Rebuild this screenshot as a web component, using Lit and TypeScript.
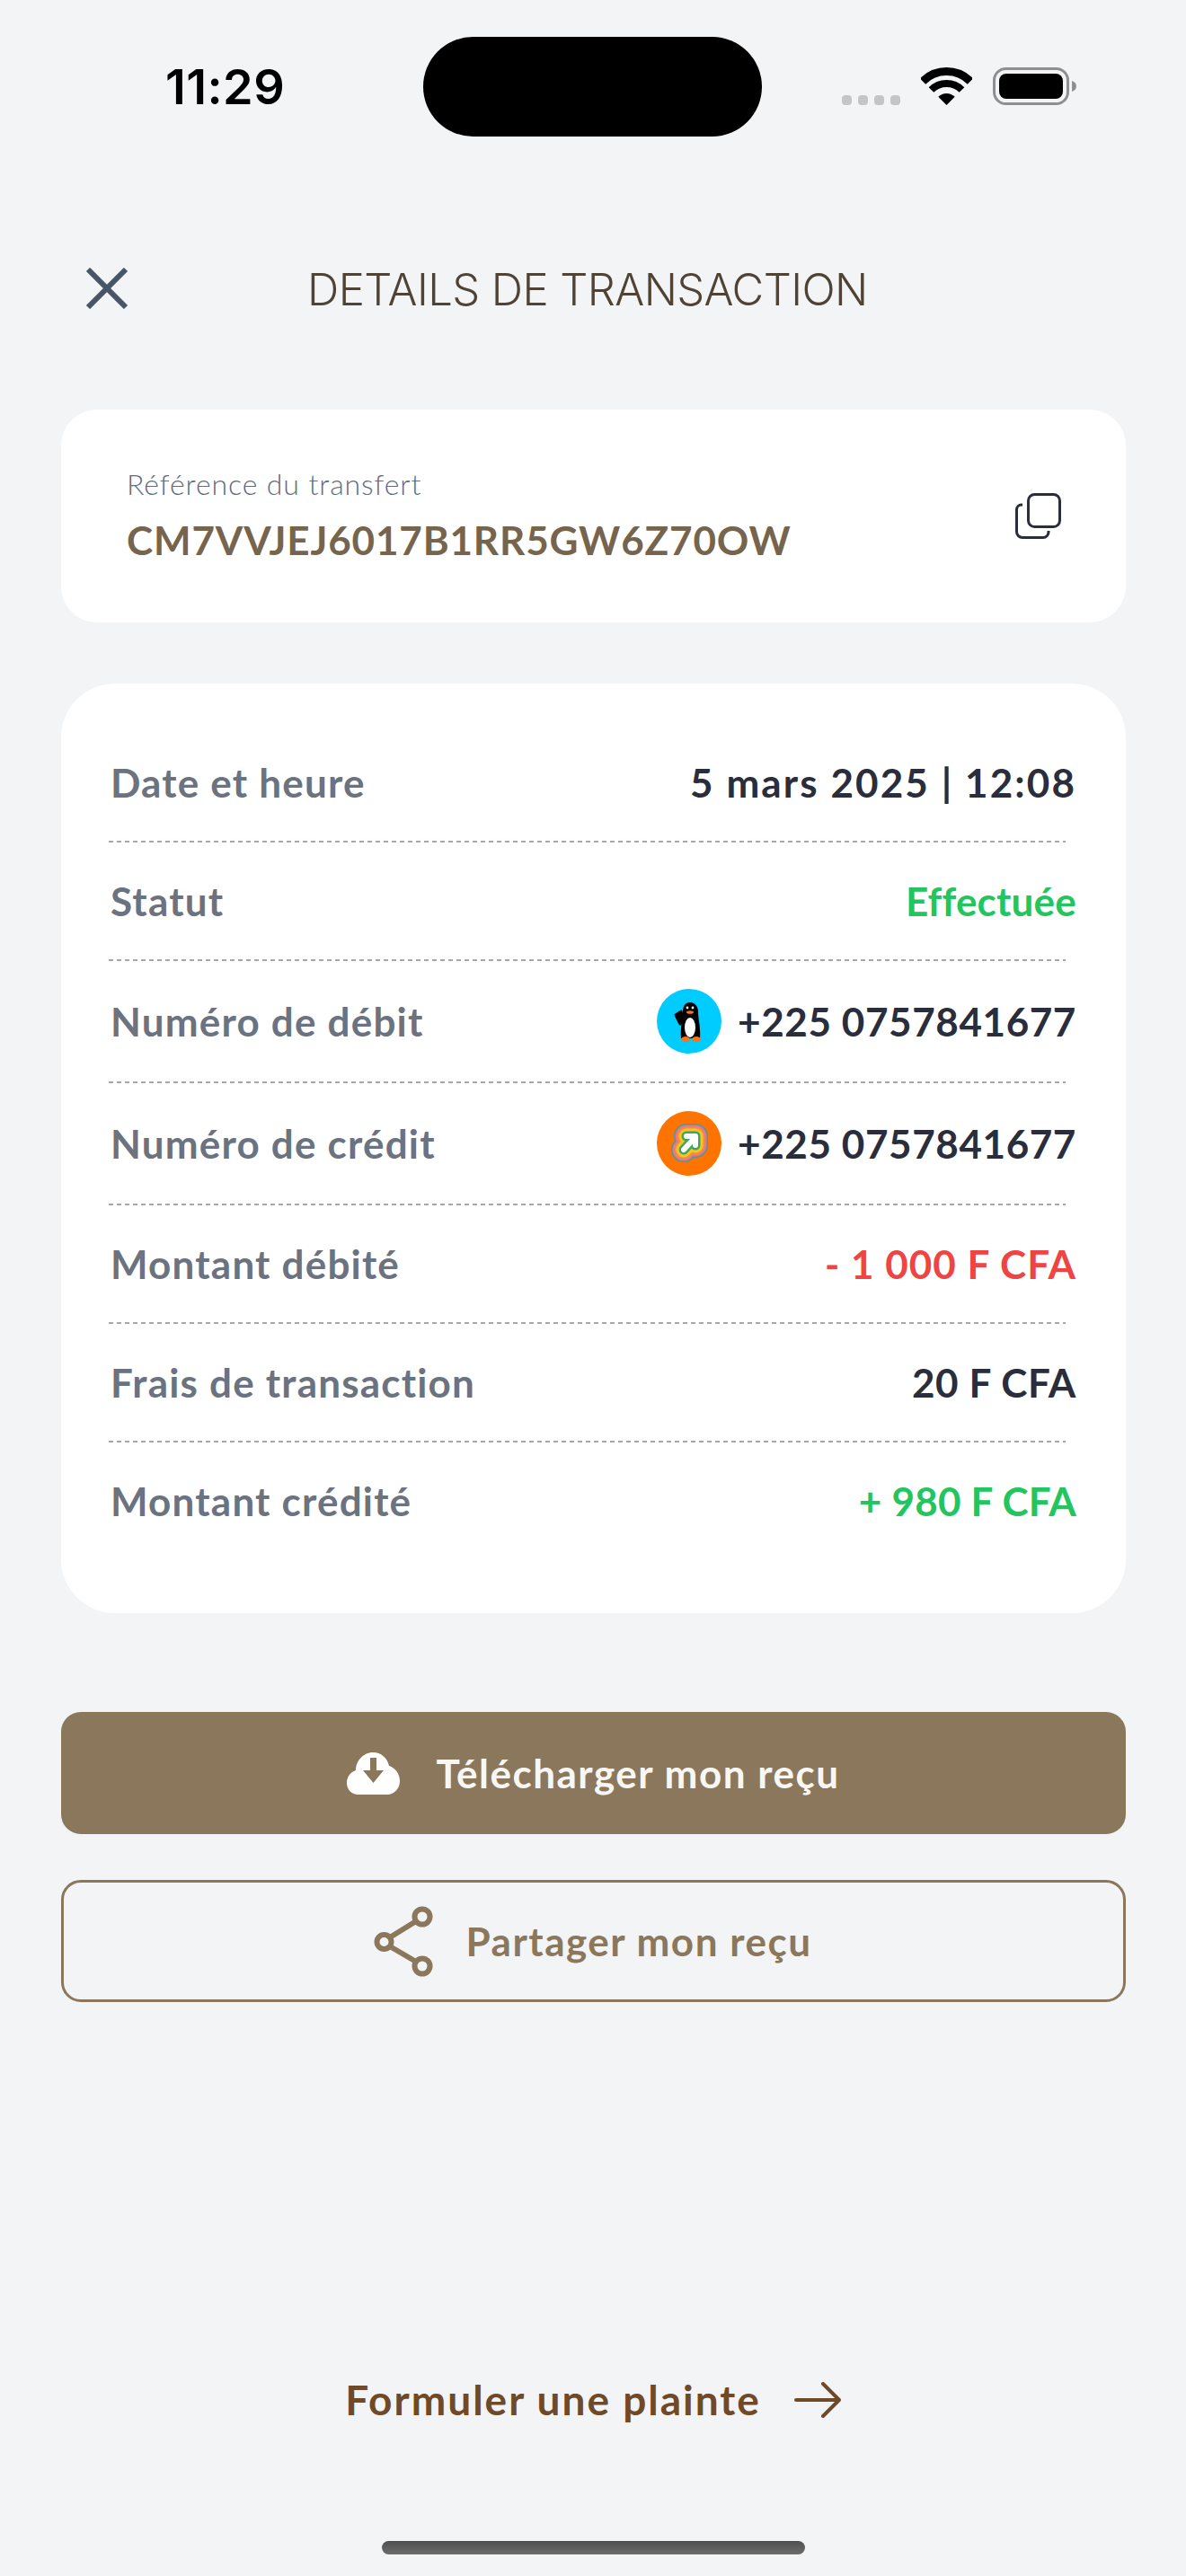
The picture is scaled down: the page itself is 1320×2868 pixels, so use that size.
/**
 * Transaction details screen
 */

import { LitElement, html, css, svg } from 'lit';
import { customElement } from 'lit/decorators.js';

type Row = { label: string; value: string; tone?: string; logo?: 'penguin' | 'arrow' };

const ROWS: Row[] = [
  { label: 'Date et heure', value: '5 mars 2025 | 12:08', tone: 'wide' },
  { label: 'Statut', value: 'Effectuée', tone: 'green' },
  { label: 'Numéro de débit', value: '+225 0757841677', logo: 'penguin' },
  { label: 'Numéro de crédit', value: '+225 0757841677', logo: 'arrow' },
  { label: 'Montant débité', value: '- 1 000 F CFA', tone: 'red' },
  { label: 'Frais de transaction', value: '20 F CFA' },
  { label: 'Montant crédité', value: '+ 980 F CFA', tone: 'green' },
];

const penguin = svg`
  <circle cx="36" cy="36" r="36" fill="#00ccff"/>
  <path d="M21 29 L27 25 L29 33 L26 39 Z" fill="#000" stroke="#000" stroke-width="3" stroke-linejoin="round"/>
  <path d="M37 15 C31 15 29 20 29 26 C29 34 26 42 27 55 L48 55 C49 42 46 34 46 26 C46 20 43 15 37 15 Z" fill="#000"/>
  <ellipse cx="37" cy="43" rx="6" ry="11" fill="#fff"/>
  <circle cx="34" cy="21" r="1.4" fill="#fff"/>
  <circle cx="40" cy="21" r="1.4" fill="#fff"/>
  <ellipse cx="37" cy="26" rx="4" ry="1.8" fill="#f97316"/>
  <ellipse cx="32" cy="56" rx="5" ry="3" fill="#f97316"/>
  <ellipse cx="44" cy="56" rx="5" ry="3" fill="#f97316"/>
`;

const arrowPath = 'M30 43 L43 29 M33 28 L43 28 L43 38';
const arrowLogo = svg`
  <circle cx="36" cy="36" r="36" fill="#ff7300"/>
  <g fill="none" stroke-linecap="round" stroke-linejoin="round">
    ${[
      ['#3f9fa0', 28],
      ['#f46f8c', 25],
      ['#f0903a', 21],
      ['#f7c325', 17],
      ['#3fa65a', 11],
      ['#ffffff', 6],
    ].map(([c, w]) => svg`<path d=${arrowPath} stroke=${c} stroke-width=${w}/>`)}
  </g>
`;

@customElement('app-root')
export class AppRoot extends LitElement {
  static styles = css`
    :host {
      display: block;
      width: 1320px;
      height: 2868px;
      background: #f3f4f6;
      font-family: 'Lato', 'Liberation Sans', sans-serif;
      overflow: hidden;
    }

    .page {
      height: 2868px;
      display: flex;
      flex-direction: column;
      box-sizing: border-box;
    }

    /* status bar */
    .status {
      display: flex;
      align-items: flex-start;
      padding-top: 41px;
      height: 111px;
      flex: none;
    }
    .time {
      margin: 28px 0 0 184px;
      width: 287px;
      font-family: 'Inter', sans-serif;
      font-weight: 600;
      font-size: 54px;
      line-height: 56px;
      letter-spacing: 0.4px;
      color: #000;
    }
    .island {
      width: 377px;
      height: 111px;
      border-radius: 56px;
      background: #000;
    }
    .dots {
      display: flex;
      gap: 7px;
      margin: 65px 0 0 89px;
    }
    .dots span {
      width: 11px;
      height: 11px;
      border-radius: 4px;
      background: #c4c5c8;
    }
    .wifi {
      margin: 34px 0 0 23px;
    }
    .battery {
      margin: 34px 0 0 23px;
    }

    /* header */
    .header {
      display: flex;
      align-items: center;
      height: 46px;
      margin-top: 146px;
      padding-left: 95px;
      flex: none;
    }
    .title {
      margin: 3px 0 0 199px;
      font-family: 'Inter', sans-serif;
      font-weight: 300;
      font-size: 49px;
      line-height: 46px;
      letter-spacing: -0.6px;
      color: #4f4336;
      white-space: nowrap;
    }

    .content {
      display: flex;
      flex-direction: column;
      padding: 0 67px 0 68px;
      flex: none;
    }

    .ref-card {
      margin-top: 112px;
      height: 237px;
      box-sizing: border-box;
      padding: 0 72px 0 73px;
      background: #fff;
      border-radius: 40px;
      display: flex;
      align-items: center;
      justify-content: space-between;
    }
    .ref-text {
      padding-bottom: 4px;
    }
    .ref-label {
      font-size: 32px;
      line-height: 40px;
      font-weight: 300;
      color: #5f6c82;
      letter-spacing: 0.9px;
    }
    .ref-value {
      margin-top: 16px;
      font-size: 44px;
      line-height: 52px;
      font-weight: 700;
      letter-spacing: 0.85px;
      color: #76644c;
    }

    .details {
      margin-top: 68px;
      height: 1035px;
      box-sizing: border-box;
      padding: 45px 55px 0 53px;
      background: #fff;
      border-radius: 60px;
    }
    .row {
      display: flex;
      align-items: center;
      justify-content: space-between;
      padding: 31px 0 31px 2px;
      min-height: 68px;
      font-size: 44px;
      line-height: 52px;
      font-weight: 700;
    }
    .label {
      color: #6b7280;
      letter-spacing: 1.2px;
    }
    .value {
      display: flex;
      align-items: center;
      gap: 18px;
      letter-spacing: 0.6px;
      color: #2a2e3c;
    }
    .value.wide {
      letter-spacing: 2.1px;
    }
    .value.green {
      color: #22c55e;
      letter-spacing: 0.2px;
    }
    .value.red {
      color: #ef4444;
      letter-spacing: 1px;
    }
    .logo {
      width: 72px;
      height: 72px;
      flex: none;
      display: block;
    }
    .divider {
      height: 2px;
      margin-right: 12px;
      background: repeating-linear-gradient(90deg, #a3a7b0 0 5px, transparent 5px 9px);
    }

    .btn {
      height: 136px;
      box-sizing: border-box;
      display: flex;
      align-items: center;
      justify-content: center;
      border-radius: 22px;
      font-size: 44px;
      font-weight: 700;
      letter-spacing: 1.5px;
      white-space: nowrap;
    }
    .btn.solid {
      margin-top: 110px;
      background: #8b775c;
      color: #f9f7f4;
      gap: 40px;
    }
    .btn.outline {
      margin-top: 51px;
      border: 3px solid #8b775c;
      color: #8b775c;
      gap: 37px;
      padding-right: 2px;
    }

    .complaint {
      margin-top: auto;
      display: flex;
      align-items: center;
      justify-content: center;
      gap: 37px;
      font-size: 46px;
      line-height: 54px;
      font-weight: 700;
      letter-spacing: 2px;
      color: #6f4a29;
    }
    .home {
      flex: none;
      align-self: center;
      width: 471px;
      height: 15px;
      margin: 130px 0 24px;
      border-radius: 8px;
      background: linear-gradient(#4f4f4f, #6c6c6c);
    }
    svg {
      display: block;
      flex: none;
    }
  `;

  private renderRow(row: Row, index: number) {
    return html`
      <div class="row">
        <span class="label">${row.label}</span>
        <span class="value ${row.tone ?? ''}">
          ${row.logo
            ? html`<svg class="logo" viewBox="0 0 72 72">${row.logo === 'penguin' ? penguin : arrowLogo}</svg>`
            : ''}
          ${row.value}
        </span>
      </div>
      ${index < ROWS.length - 1 ? html`<div class="divider"></div>` : ''}
    `;
  }

  protected render() {
    return html`
      <div class="page">
        <div class="status">
          <span class="time">11:29</span>
          <div class="island"></div>
          <div class="dots"><span></span><span></span><span></span><span></span></div>
          <svg class="wifi" width="57" height="42" viewBox="0 0 57 42">
            <path d="M2 15.5 A37.5 37.5 0 0 1 55 15.5" fill="none" stroke="#000" stroke-width="9"/>
            <path d="M11.5 25 A24 24 0 0 1 45.5 25" fill="none" stroke="#000" stroke-width="8"/>
            <path d="M28.5 42 L19.3 32.8 A13 13 0 0 1 37.7 32.8 Z" fill="#000"/>
          </svg>
          <svg class="battery" width="93" height="42" viewBox="0 0 93 42">
            <rect x="1.5" y="1.5" width="82" height="39" rx="13" fill="none" stroke="#8e8e93" stroke-width="3"/>
            <rect x="7" y="7" width="71" height="28" rx="8" fill="#000"/>
            <path d="M88 15 C91 16 93 18 93 21 C93 24 91 26 88 27 Z" fill="#8e8e93"/>
          </svg>
        </div>

        <div class="header">
          <svg width="48" height="46" viewBox="0 0 48 46">
            <path d="M3 2 L45 44 M45 2 L3 44" stroke="#475569" stroke-width="6" fill="none"/>
          </svg>
          <span class="title">DETAILS DE TRANSACTION</span>
        </div>

        <div class="content">
          <div class="ref-card">
            <div class="ref-text">
              <div class="ref-label">Référence du transfert</div>
              <div class="ref-value">CM7VVJEJ6017B1RR5GW6Z70OW</div>
            </div>
            <svg width="51" height="51" viewBox="0 0 51 51" fill="none" stroke="#2a2e3c" stroke-width="3">
              <rect x="14.5" y="1.5" width="35" height="36" rx="7"/>
              <path d="M8 13 H7 A5.5 5.5 0 0 0 1.5 18.5 V43 A6.5 6.5 0 0 0 8 49.5 H31 A6 6 0 0 0 37 43.5 V42"/>
            </svg>
          </div>

          <div class="details">${ROWS.map((r, i) => this.renderRow(r, i))}</div>

          <div class="btn solid">
            <svg width="59" height="47" viewBox="0 0 59 47">
              <path d="M13 47 C5 47 0 41 0 34 C0 27 4 22 10 20 C10 9 19 0 29 0 C38 0 45 6 47 15 C54 17 59 24 59 32 C59 40 53 47 45 47 Z" fill="#fff"/>
              <path d="M26 6 H33 V20 H41 L29.5 34 L18 20 H26 Z" fill="#8b775c"/>
            </svg>
            <span>Télécharger mon reçu</span>
          </div>
          <div class="btn outline">
            <svg width="66" height="79" viewBox="0 0 66 79" fill="none" stroke="#8b775c" stroke-width="6">
              <circle cx="54" cy="12" r="8.5"/>
              <circle cx="11.5" cy="40" r="8"/>
              <circle cx="54" cy="67" r="8.5"/>
              <path d="M18 35 L47 17 M18 45 L47 62"/>
            </svg>
            <span>Partager mon reçu</span>
          </div>
        </div>

        <div class="complaint">
          <span>Formuler une plainte</span>
          <svg width="52" height="40" viewBox="0 0 52 40" fill="none" stroke="#6f4a29" stroke-width="4" stroke-linecap="round" stroke-linejoin="round">
            <path d="M2 20 H50 M32 2 L50 20 L32 38"/>
          </svg>
        </div>
        <div class="home"></div>
      </div>
    `;
  }
}

declare global {
  interface HTMLElementTagNameMap {
    'app-root': AppRoot;
  }
}
